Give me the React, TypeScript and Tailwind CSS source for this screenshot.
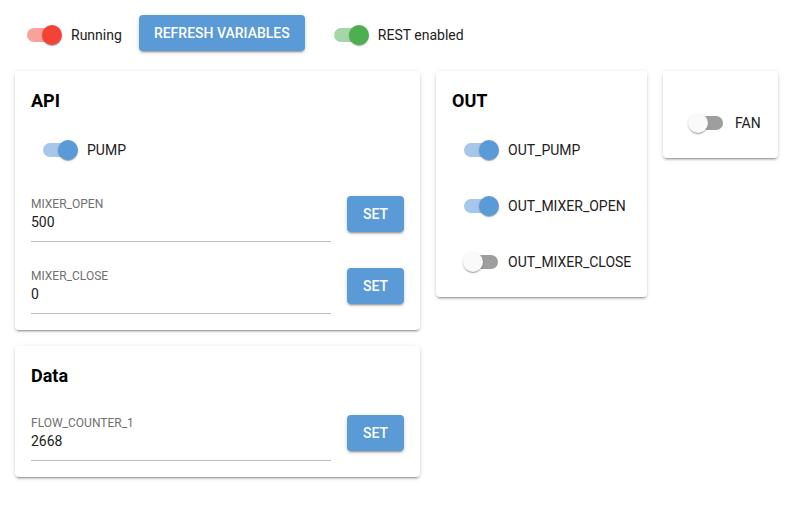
import React from 'react';

type Tone = 'red' | 'green' | 'blue';

// トグルスイッチ（MUI風）
function Toggle({ on, tone = 'blue' }: { on: boolean; tone?: Tone }) {
  const track = !on
    ? 'bg-[#9e9e9e]'
    : tone === 'red'
      ? 'bg-[#f9a19b]'
      : tone === 'green'
        ? 'bg-[#a5d6a7]'
        : 'bg-[#a6c6ea]';
  const thumb = !on
    ? 'bg-[#fafafa] -left-px'
    : tone === 'red'
      ? 'bg-[#f44336] -right-px'
      : tone === 'green'
        ? 'bg-[#4caf50] -right-px'
        : 'bg-[#5a9ad6] -right-px';
  return (
    <span className={`relative block w-[34px] h-[14px] rounded-full shrink-0 ${track}`}>
      <span
        className={`absolute top-[-3px] w-5 h-5 rounded-full shadow-[0_2px_1px_-1px_rgba(0,0,0,0.2),0_1px_1px_0_rgba(0,0,0,0.14),0_1px_3px_0_rgba(0,0,0,0.12)] ${thumb}`}
      />
    </span>
  );
}

function SwitchRow({ label, on, tone }: { label: string; on: boolean; tone?: Tone }) {
  return (
    <div className="flex items-center h-[38px] pl-3 gap-2.5">
      <Toggle on={on} tone={tone} />
      <span className="text-[14px] text-[#212121]">{label}</span>
    </div>
  );
}

function Card({ children, className = '' }: { children: React.ReactNode; className?: string }) {
  return (
    <div
      className={`bg-white rounded-[4px] shadow-[0_3px_1px_-2px_rgba(0,0,0,0.2),0_2px_2px_0_rgba(0,0,0,0.14),0_1px_5px_0_rgba(0,0,0,0.12)] ${className}`}
    >
      {children}
    </div>
  );
}

const btnShadow =
  'shadow-[0_3px_1px_-2px_rgba(0,0,0,0.2),0_2px_2px_0_rgba(0,0,0,0.14),0_1px_5px_0_rgba(0,0,0,0.12)]';

function Field({ label, value }: { label: string; value: string }) {
  return (
    <div className="flex items-start gap-4">
      <div className="flex-1 border-b border-[#bdbdbd] pb-[9px]">
        <div className="text-[12px] leading-4 text-[#707070]">{label}</div>
        <div className="text-[14px] leading-5 text-[#212121]">{value}</div>
      </div>
      <button
        className={`w-[57px] h-9 rounded-[4px] bg-[#5a9ad6] text-white text-[14px] font-medium ${btnShadow}`}
      >
        SET
      </button>
    </div>
  );
}

function Title({ children }: { children: React.ReactNode }) {
  return <h2 className="text-[18px] leading-7 font-bold text-black">{children}</h2>;
}

export default function App() {
  return (
    <div
      className="min-h-screen bg-white px-[15px] pt-[15px]"
      style={{ fontFamily: 'Roboto, "Liberation Sans", sans-serif' }}
    >
      {/* ヘッダー行 */}
      <div className="flex items-center h-10">
        <div className="flex items-center pl-3 gap-2.5">
          <Toggle on tone="red" />
          <span className="text-[14px] text-[#212121]">Running</span>
        </div>
        <button
          className={`ml-[17px] self-start h-9 w-[166px] rounded-[4px] bg-[#5a9ad6] text-white text-[14px] font-medium ${btnShadow}`}
        >
          REFRESH VARIABLES
        </button>
        <div className="flex items-center ml-[29px] gap-2.5">
          <Toggle on tone="green" />
          <span className="text-[14px] text-[#212121]">REST enabled</span>
        </div>
      </div>

      {/* カード群 */}
      <div className="flex items-start gap-4 mt-4">
        <div className="flex flex-col gap-4 w-[405px]">
          <Card className="p-4">
            <Title>API</Title>
            <div className="mt-4">
              <SwitchRow label="PUMP" on />
            </div>
            <div className="mt-[27px] flex flex-col gap-[26px]">
              <Field label="MIXER_OPEN" value="500" />
              <Field label="MIXER_CLOSE" value="0" />
            </div>
          </Card>
          <Card className="p-4">
            <Title>Data</Title>
            <div className="mt-[25px]">
              <Field label="FLOW_COUNTER_1" value="2668" />
            </div>
          </Card>
        </div>

        <Card className="w-[211px] p-4">
          <Title>OUT</Title>
          <div className="mt-4 flex flex-col gap-[18px]">
            <SwitchRow label="OUT_PUMP" on />
            <SwitchRow label="OUT_MIXER_OPEN" on />
            <SwitchRow label="OUT_MIXER_CLOSE" on={false} />
          </div>
        </Card>

        <Card className="w-[115px] px-4 pt-[33px] pb-4">
          <div className="flex items-center h-[38px] pl-2.5 gap-3">
            <Toggle on={false} />
            <span className="text-[14px] text-[#212121]">FAN</span>
          </div>
        </Card>
      </div>
    </div>
  );
}
